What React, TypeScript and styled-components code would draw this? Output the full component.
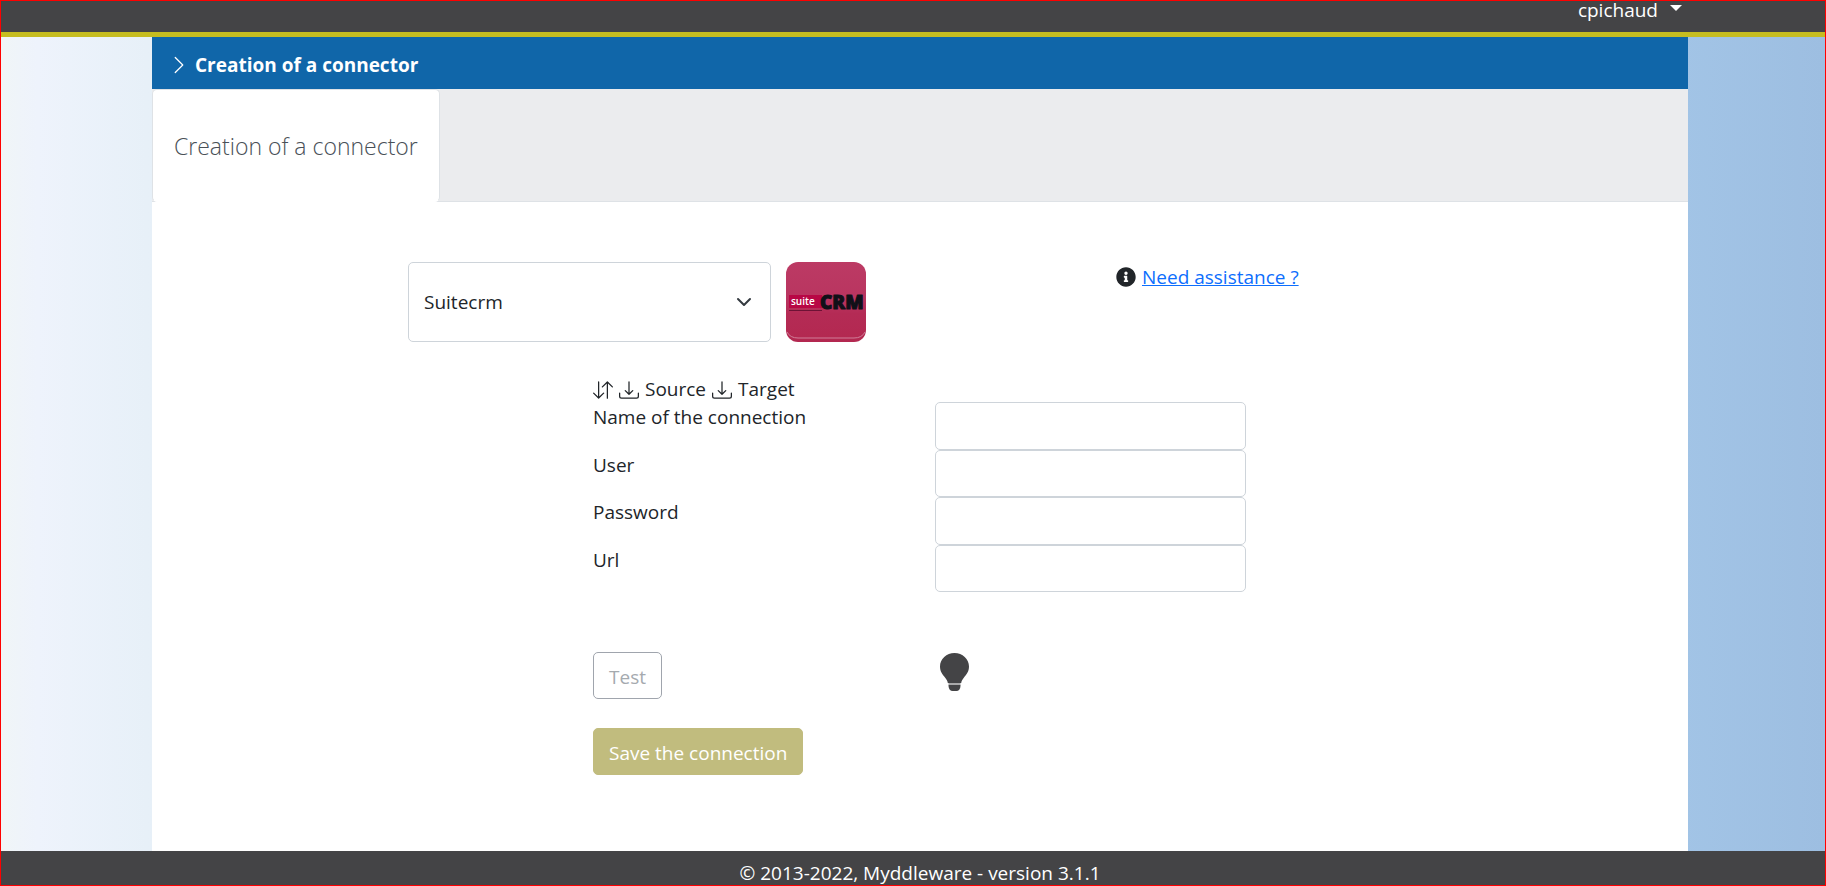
import React from 'react';
import styled, { createGlobalStyle } from 'styled-components';
import { BsArrowDownUp, BsChevronRight, BsDownload } from 'react-icons/bs';
import { FaInfoCircle } from 'react-icons/fa';

const GlobalStyle = createGlobalStyle`
  *, *::before, *::after { box-sizing: border-box; }
  body {
    margin: 0;
    font-family: "Segoe UI", "Open Sans", "Noto Sans", sans-serif;
    font-size: 19px;
    line-height: 30px;
    color: #212529;
  }
`;

const Page = styled.div`
  min-height: 100vh;
  display: flex;
  flex-direction: column;
  border: 1px solid #ff0000;
  background: linear-gradient(90deg, #f0f5f7 0, #eef3fc 2%, #e7f0f8 8%, #a2c4e6 92%, #9dbee1 100%);
`;

const PageGrid = styled.div`
  display: grid;
  grid-template-columns: 151fr minmax(0, 1536px) 137fr;
`;

const Header = styled.header`
  height: 36px;
  background: #444446;
  border-bottom: 5px solid #c6bd20;
`;

const UserBar = styled.div`
  grid-column: 2;
  display: flex;
  justify-content: flex-end;
  padding-right: 6px;
`;

const UserButton = styled.button`
  display: flex;
  align-items: flex-start;
  gap: 12px;
  padding: 0;
  border: 0;
  background: none;
  color: #fff;
  font: inherit;
  line-height: 18px;
`;

const Caret = styled.span`
  margin-top: 4px;
  border: 6px solid transparent;
  border-top-color: #fff;
  border-bottom: 0;
`;

const Body = styled(PageGrid)`
  flex: 1;
`;

const Main = styled.main`
  grid-column: 2;
  background: #fff;
`;

const TitleBar = styled.div`
  display: flex;
  align-items: center;
  gap: 6px;
  height: 52px;
  padding: 4px 17px 0;
  background: #1066a9;
  color: #fff;
`;

const Title = styled.h1`
  margin: 0;
  font-size: 19px;
  line-height: 30px;
  font-weight: 700;
`;

const Tabs = styled.nav`
  display: flex;
  height: 113px;
  background: #ebecee;
  border-bottom: 1px solid #dee2e6;
`;

const Tab = styled.a`
  display: flex;
  align-items: center;
  margin-bottom: -1px;
  padding: 0 21px;
  border: 1px solid #dee2e6;
  border-bottom-color: #fff;
  border-radius: 5px;
  background: #fff;
  color: #495057;
  font-size: 23px;
  font-weight: 300;
  text-decoration: none;
`;

const Content = styled.div`
  padding: 60px 256px 76px;
`;

const TopRow = styled.div`
  display: grid;
  grid-template-columns: 363px 80px 1fr;
  column-gap: 15px;
`;

const SelectWrap = styled.div`
  display: grid;
  align-items: center;
`;

const Select = styled.select`
  grid-area: 1 / 1;
  width: 100%;
  height: 80px;
  padding: 0 15px;
  appearance: none;
  border: 1px solid #ced4da;
  border-radius: 5px;
  background: #fff;
  color: #212529;
  font: inherit;
`;

const SelectArrow = styled.svg`
  grid-area: 1 / 1;
  justify-self: end;
  width: 16px;
  height: 16px;
  margin-right: 19px;
  pointer-events: none;
`;

const Help = styled.div`
  display: flex;
  align-items: center;
  gap: 6px;
  height: 30px;
  padding-left: 235px;
`;

const HelpLink = styled.a`
  color: #0d6efd;
`;

const Form = styled.form`
  padding: 32px 185px 0;
`;

const Legend = styled.div`
  display: flex;
  align-items: center;
  gap: 6px;

  svg {
    margin-top: 2px;
  }
`;

const Fields = styled.div`
  display: grid;
  grid-auto-rows: 1fr;
  min-height: 190px;
  margin-top: -2px;
`;

const Field = styled.div`
  display: grid;
  grid-template-columns: 342px 311px;
`;

const Input = styled.input`
  width: 100%;
  padding: 0 15px;
  border: 1px solid #ced4da;
  border-radius: 5px;
  font: inherit;
`;

const TestRow = styled.div`
  display: grid;
  grid-template-columns: 342px 311px;
  margin-top: 60px;
`;

const Button = styled.button<{ $solid?: boolean }>`
  justify-self: start;
  height: 47px;
  padding: 2px 15px 0;
  border: 1px solid ${p => (p.$solid ? '#c1bc7e' : '#a0a5ad')};
  border-radius: 5px;
  background: ${p => (p.$solid ? '#c1bc7e' : '#fff')};
  color: ${p => (p.$solid ? '#fff' : '#a5aaaf')};
  font: inherit;
`;

const SaveRow = styled.div`
  margin-top: 29px;
`;

const Bulb = styled.svg`
  width: 29px;
  height: 38px;
  margin: 1px 5px;
`;

const Footer = styled.footer`
  height: 34px;
  padding-top: 8px;
  background: #444446;
  color: #fff;
  text-align: center;
  line-height: 28px;
  overflow: hidden;
`;

const FooterText = styled.div`
  grid-column: 2;
`;

const fields = [
  { id: 'name', label: 'Name of the connection', type: 'text' },
  { id: 'user', label: 'User', type: 'text' },
  { id: 'password', label: 'Password', type: 'password' },
  { id: 'url', label: 'Url', type: 'text' },
];

function SuiteLogo() {
  return (
    <svg width="80" height="80" viewBox="0 0 80 80" role="img" aria-label="SuiteCRM">
      <defs>
        <linearGradient id="tile" x1="0" y1="0" x2="0" y2="1">
          <stop offset="0" stopColor="#bc3a64" />
          <stop offset="0.45" stopColor="#b93560" />
          <stop offset="0.65" stopColor="#b42b55" />
          <stop offset="1" stopColor="#b32850" />
        </linearGradient>
      </defs>
      <rect width="80" height="80" rx="12" fill="url(#tile)" />
      <path d="M1 70 Q4 76 12 76 H68 Q76 76 79 70" fill="none" stroke="#d07d98" strokeWidth="1" />
      <rect x="3" y="33" width="33" height="13" fill="#b80745" />
      <path d="M3 48.500H36" stroke="#6d1235" strokeWidth="1" />
      <text x="5" y="43" fontFamily="Open Sans, sans-serif" fontSize="10" fontWeight="600" fill="#fff">suite</text>
      <text x="34" y="47" fontFamily="Open Sans, sans-serif" fontSize="19" fontWeight="800" fill="#101018" stroke="#101018" strokeWidth="1" strokeLinejoin="round">CRM</text>
    </svg>
  );
}

export default function App() {
  return (
    <>
      <GlobalStyle />
      <Page>
        <Header>
          <PageGrid>
            <UserBar>
              <UserButton type="button">cpichaud<Caret /></UserButton>
            </UserBar>
          </PageGrid>
        </Header>
        <Body>
          <Main>
            <TitleBar>
              <BsChevronRight size={20} aria-hidden />
              <Title>Creation of a connector</Title>
            </TitleBar>
            <Tabs>
              <Tab href="#connector">Creation of a connector</Tab>
            </Tabs>
            <Content>
              <TopRow>
                <SelectWrap>
                  <Select aria-label="Solution" defaultValue="suitecrm">
                    <option value="suitecrm">Suitecrm</option>
                  </Select>
                  <SelectArrow viewBox="0 0 16 16" aria-hidden>
                    <path d="m2 5 6 6 6-6" fill="none" stroke="#343a40" strokeWidth="2" strokeLinecap="round" strokeLinejoin="round" />
                  </SelectArrow>
                </SelectWrap>
                <SuiteLogo />
                <Help>
                  <FaInfoCircle size={20} aria-hidden />
                  <HelpLink href="#help">Need assistance ?</HelpLink>
                </Help>
              </TopRow>
              <Form onSubmit={e => e.preventDefault()}>
                <Legend>
                  <BsArrowDownUp size={20} aria-hidden />
                  <BsDownload size={20} aria-hidden />
                  <span>Source</span>
                  <BsDownload size={20} aria-hidden />
                  <span>Target</span>
                </Legend>
                <Fields>
                  {fields.map(f => (
                    <Field key={f.id}>
                      <label htmlFor={f.id}>{f.label}</label>
                      <Input id={f.id} type={f.type} />
                    </Field>
                  ))}
                </Fields>
                <TestRow>
                  <Button type="button" disabled>Test</Button>
                  <Bulb viewBox="0 0 29 38" aria-hidden>
                    <path d="M14.500 0C6.500 0 0 6 0 13.500c0 5 2.600 8 5 11 1.600 2 2.500 3.500 2.800 5.500h13.400c.3-2 1.200-3.500 2.800-5.500 2.400-3 5-6 5-11C29 6 22.500 0 14.500 0Z" fill="#444446" />
                    <path d="M8.500 30h12v2h-12z" fill="#a9a9aa" />
                    <path d="M8.500 32h12v1c0 3-2 5-4 5h-4c-2 0-4-2-4-5z" fill="#444446" />
                  </Bulb>
                </TestRow>
                <SaveRow>
                  <Button type="submit" disabled $solid>Save the connection</Button>
                </SaveRow>
              </Form>
            </Content>
          </Main>
        </Body>
        <Footer>
          <PageGrid>
            <FooterText>© 2013-2022, Myddleware - version 3.1.1</FooterText>
          </PageGrid>
        </Footer>
      </Page>
    </>
  );
}
